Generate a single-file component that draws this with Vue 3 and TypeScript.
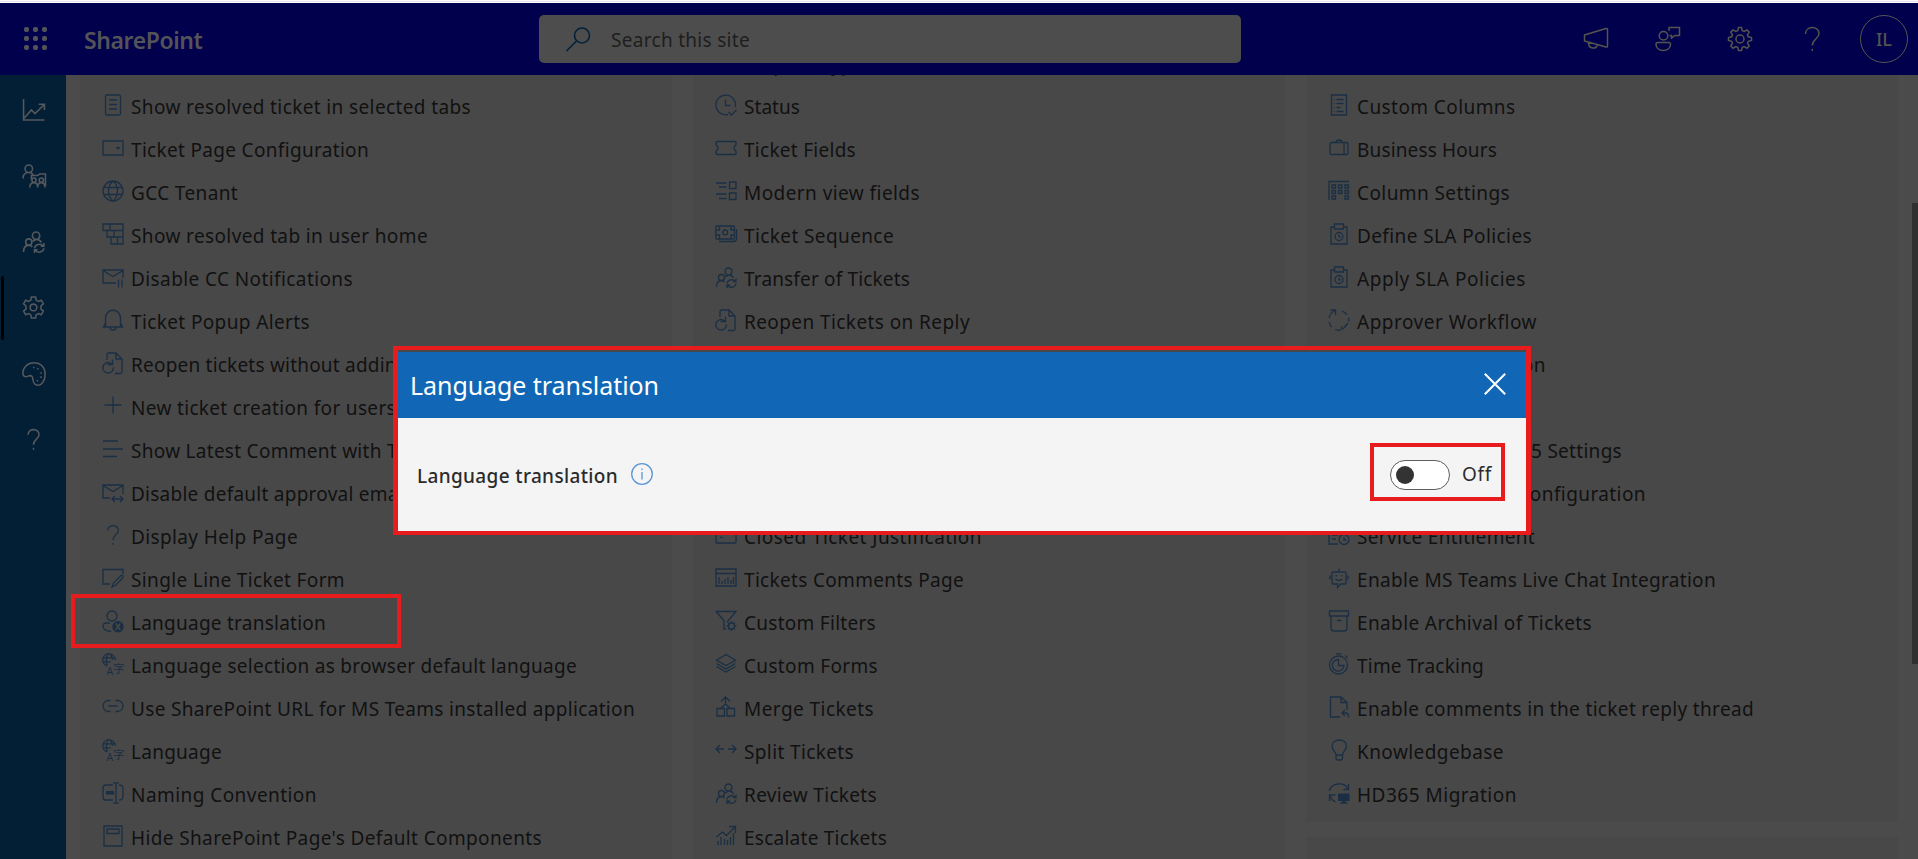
<script setup lang="ts">
import { nextTick, onMounted, ref } from 'vue'

interface Item {
  icon: string
  label: string
  /** Advance width of the label in pixels. */
  w: number
}

interface Glyph {
  s?: string
  f?: string
  text?: { x: number; y: number; size: number; t: string }[]
}

const people =
  'M13.5 2a3.5 3.5 0 1 1 0 7a3.5 3.5 0 0 1 0-7M6.5 8.5a3 3 0 1 1 0 6a3 3 0 0 1 0-6M1.5 21c0-4 2-6.3 5-6.5c1.500 0 2.500.7 3.300 1.700M10.500 11c1-1.200 2-2 3.500-2c2 0 3.600 1 4.500 3M12 17.500c.5-4 6-5 8.500-2M21 12.500v3h-3M21 17.500c-.5 4-6 5-8.500 2M12 22v-3h3'
const fileRedo =
  'M5 8V2.500q0-1.500 1.500-1.500H14l6 6V20q0 1.500-1.500 1.500H13M14 1v6h6M9.500 12C5.500 8.500.8 12 .8 16.200a5.300 5.300 0 1 0 10.600-1M10.500 7.500v5h-5'
const clipboard =
  'M6 4H3v17h16V4h-3M6.500 1h9v5h-9zM11 9.500a4 4 0 1 1 0 8a4 4 0 0 1 0-8M11 11.500v2.300h2'
const help = 'M5.800 6.500C5.800-.2 16.500 0 16.300 6.500C16.200 10.500 11 11 11 16M11 19v1.800'
const gear =
  'M11 7.800a3.200 3.200 0 1 1 0 6.400a3.200 3.200 0 0 1 0-6.400M9 1h4l.5 2.900l2.200 1.300l2.800-1.100l2 3.500L18.200 9.500v3l2.300 1.900l-2 3.500l-2.800-1.100l-2.200 1.300L13 21H9l-.5-2.900l-2.200-1.300l-2.800 1.100l-2-3.500L3.800 12.500v-3L1.500 7.600l2-3.500l2.800 1.100l2.200-1.300z'
const locale: Glyph = {
  s: 'M5 12.800A6.200 6.200 0 1 1 13.200 7M5.500 12.500Q3 7 6 1M8 1q2.500 2.500 2.500 6M1.500 4.800h11M1.200 8.800h7.500',
  text: [
    { x: 4.500, y: 21.500, size: 10.500, t: 'A' },
    { x: 11, y: 19.500, size: 11.500, t: '字' },
  ],
}

const glyphs: Record<string, Glyph> = {
  doc: { s: 'M5 1h12q1.500 0 1.500 1.500v17q0 1.500-1.500 1.500H5q-1.500 0-1.500-1.500v-17Q3.500 1 5 1M7 6h8M7 10.500h8M7 15h8' },
  page: { s: 'M1 4h20v14H1z', f: 'M13.500 10h5L16 12.800z' },
  globe: { s: 'M11 1a10 10 0 1 1 0 20a10 10 0 0 1 0-20M11 1c-6 5-6 15 0 20M11 1c6 5 6 15 0 20M2 7.500h18M2 14.500h18' },
  stack: { s: 'M1 1h20v6.500H1zM8 1v6.500M5 7.500h16V14H5zM12 7.500V14M9 14h12v7H9zM15.500 14v7' },
  mailPause: { s: 'M14 17H1V4h20v8M1 4.500l10 6l10-6M16.500 13.500v8M20 13.500v8' },
  bell: { s: 'M3.500 17V9.500C3.500-1.500 18.500-1.500 18.500 9.500V17M3.500 14l-2 4h19l-2-4M8 18.500c.5 3.500 5.500 3.500 6 0' },
  redo: { s: fileRedo },
  plus: { s: 'M11 1.500v17M2.500 10h17' },
  lines: { s: 'M1 3h15M1 11h20M1 18.500h14' },
  mailSync: { s: 'M8 17H1V4h20v9M1 4.500l10 6l10-6M10 18h11M13 15l-3 3l3 3M18 15l3 3l-3 3' },
  help: { s: help },
  edit: { s: 'M8 17H1V2.500h20V7M10 20l1.500-4L19 8.500q1.500-1 2 .5q.5 1-.5 2L14 18z' },
  userX: {
    s: 'M10 1a5 5 0 1 1 0 10a5 5 0 0 1 0-10M8 13H4.500Q1 13 1 16q0 5 8 5.500',
    f: 'M16 11a5.700 5.700 0 1 1 0 11.400a5.700 5.700 0 0 1 0-11.400m-3 2.500l2 3.200l-2 3.300h1.800l1.200-2.200l1.200 2.200h1.800l-2-3.300l2-3.200h-1.800l-1.200 2.100l-1.200-2.100z',
  },
  locale,
  link: { s: 'M8.500 4.500h-2a5.500 5.500 0 0 0 0 11h2M13.500 4.500h2a5.500 5.500 0 0 1 0 11h-2M6.500 10h9' },
  rename: { s: 'M11 3H4Q1 3 1 6v9q0 3 3 3h7M17 3q4 0 4 3v9q0 3-4 3M14 1v20M11 .8h6M11 21.200h6', f: 'M4 9h8v3.500H4z' },
  layout: { s: 'M2 1h18v20H2zM5 4h12v4.500H5z' },
  clock: { s: 'M13 20.500A9.800 9.800 0 1 1 20.300 13M10.500 5.500v6h5M13.500 18l3 3l5-5' },
  ticket: { s: 'M2 4.500h18q1 0 1 1v2.300q-4 3.200 0 6.400v2.300q0 1-1 1H2q-1 0-1-1v-2.300q4-3.200 0-6.400V5.500q0-1 1-1' },
  modern: { s: 'M14.500 2H21v6.500h-6.500zM14.500 13H21v6.500h-6.500zM1 3h10.500M4 7h7.500M1 14h10.500M4 18.500h7.500' },
  money: { s: 'M2 3h16q1.500 0 1.500 1.500v10Q19.500 16 18 16H2Q.8 16 .8 14.500v-10Q.8 3 2 3M10.200 7a2.400 2.400 0 1 1 0 4.800a2.400 2.400 0 0 1 0-4.800M1 7h3.500V3M16 3v4h3.500M1 12h3.500v4M16 16v-4h3.500M4 18.500h14.500q3 0 3-3V6' },
  people: { s: people },
  card: { s: 'M1 4h20v14q0 1-1 1H2q-1 0-1-1zM5 13l3 1' },
  report: { s: 'M1 2h20v17H1zM1 6.500h20M4 17v-7M7 17v-3M10 17v-5M13 17v-7M16 17v-4M18.500 17v-7' },
  filter: { s: 'M1 1.500h20L12 12M1 1.500l8 9V19h2M16.500 13a3 3 0 1 1 0 6a3 3 0 0 1 0-6M16.500 11v2M16.500 19v2M11.500 16h2M19.500 16h2M13 12.500l1.400 1.400M18.600 18.100l1.400 1.400M13 19.500l1.400-1.400M18.600 13.900l1.400-1.400' },
  layers: { s: 'M11 1.500l9.500 5.700L11 12.500L1.500 7.200zM1.500 10.500L11 16l9.500-5.500M1.500 13.500L11 19l9.500-5.500' },
  merge: { s: 'M2 12.500h7.500V20H2zM12 12.500h7.500V20H12zM10.500 9V1M6 5.500L10.500 1L15 5.500M6 12l4.500-4l4.500 4' },
  split: { s: 'M9 10H1M5 6l-4 4l4 4M13 10h8M17 6l4 4l-4 4' },
  chart: { s: 'M1.500 12l6-5l4 3.500L20 2M14 1.500h6.500V8M3 20v-4M6 20v-8M9.500 20v-6M12.500 20v-5M15.500 20v-8M18.500 20V8' },
  list: { s: 'M3.500 1h15v20h-15zM8.500 5.500h7M8.500 9.500h7M8.500 13.500h4M8.500 17.500h7M5.800 5.500h.8M5.800 9.500h.8M5.800 13.500h.8M5.800 17.500h.8' },
  bag: { s: 'M3.500 5.500h15q1.500 0 1.500 1.500v9q0 1.500-1.500 1.500h-15Q2 17.500 2 16V7q0-1.500 1.500-1.500M8 5.500q0-2.500 3-2.500t3 2.500M16 5.500v12' },
  grid: { s: 'M1 20V1.500h20M4 5h3.500v3H4zM10.500 5H14v3h-3.500zM17 5h3.500v3H17zM4 10.500h3.500v3H4zM10.500 10.500H14v3h-3.500zM17 10.500h3.500v3H17zM4 16h3.500v3H4zM17 16h3.500v3H17z' },
  clipboard: { s: clipboard },
  cycle: { s: 'M7 1.500C4 3 1.500 6 1.200 9M2.500 1h5v5M1.200 13q.5 3 2.500 5M7 20.500q3 1.200 5.500.5M15 20l5-6M13.500 17v4M14 2q3 1 5 4M20.500 8.500q.5 2.500 0 4' },
  service: { s: 'M10 20H1V4h18v5M4 11h6M4 15h4M16 10.500a5 5 0 1 1 0 10a5 5 0 0 1 0-10M16 13v3h2.500' },
  bot: { s: 'M5 5h12q1 0 1 1v10q0 1-1 1h-4.500L9.500 20.500V17H5q-1 0-1-1V6q0-1 1-1M11 5V1.500M2 8.500v4M20 8.500v4M8.300 8v1.500M13.700 8v1.500M7.500 12q3.500 3 7 0' },
  archive: { s: 'M1.500 1h19v5h-19zM3 6v12q0 3 3 3h10q3 0 3-3V6M9 10.500h4.500' },
  timer: { s: 'M10.500 3a9 9 0 1 1 0 18a9 9 0 0 1 0-18M10.500 6.500A5.800 5.800 0 1 0 16 12.500h-5.500zM8 .8h5.500M17.500 2.500l2 2.500' },
  reply: { s: 'M12 21H2.500V1H13l6 5.500V14M13 1v5.500h6M17 14l-3 3l3 3M14 17h3.500q3.500 0 3 4.500' },
  bulb: { s: 'M8 16c0-3-4-5-4-9c0-8 14.500-8 14.500 0c0 4-4 6-4 9zM8 16v3q0 2 2 2h2.500q2 0 2-2v-3' },
  migrate: { s: 'M1.500 9C3 0 17 0 20 7M20.500 2v5.500h-5M1.500 19v-6h6M2 14q2 4.500 5.500 6', f: 'M10 11.500h11.500v7.500h-4v1.500h2v1.200h-7.500v-1.200h2V19h-4z' },
}

const columns = ref<{ lead: boolean; items: Item[] }[]>([
  {
    lead: false,
    items: [
      { icon: 'doc', label: 'Show resolved ticket in selected tabs', w: 340 },
      { icon: 'page', label: 'Ticket Page Configuration', w: 238 },
      { icon: 'globe', label: 'GCC Tenant', w: 107 },
      { icon: 'stack', label: 'Show resolved tab in user home', w: 297 },
      { icon: 'mailPause', label: 'Disable CC Notifications', w: 222 },
      { icon: 'bell', label: 'Ticket Popup Alerts', w: 179 },
      { icon: 'redo', label: 'Reopen tickets without adding comments', w: 379 },
      { icon: 'plus', label: 'New ticket creation for users', w: 265 },
      { icon: 'lines', label: 'Show Latest Comment with Time', w: 301 },
      { icon: 'mailSync', label: 'Disable default approval email', w: 278 },
      { icon: 'help', label: 'Display Help Page', w: 167 },
      { icon: 'edit', label: 'Single Line Ticket Form', w: 214 },
      { icon: 'userX', label: 'Language translation', w: 195 },
      { icon: 'locale', label: 'Language selection as browser default language', w: 446 },
      { icon: 'link', label: 'Use SharePoint URL for MS Teams installed application', w: 504 },
      { icon: 'locale', label: 'Language', w: 91 },
      { icon: 'rename', label: 'Naming Convention', w: 186 },
      { icon: 'layout', label: "Hide SharePoint Page's Default Components", w: 411 },
    ],
  },
  {
    lead: true,
    items: [
      { icon: 'ticket', label: 'Request Type', w: 119 },
      { icon: 'clock', label: 'Status', w: 56 },
      { icon: 'ticket', label: 'Ticket Fields', w: 112 },
      { icon: 'modern', label: 'Modern view fields', w: 176 },
      { icon: 'money', label: 'Ticket Sequence', w: 150 },
      { icon: 'people', label: 'Transfer of Tickets', w: 166 },
      { icon: 'redo', label: 'Reopen Tickets on Reply', w: 226 },
      { icon: 'people', label: 'Assign Tickets', w: 132 },
      { icon: 'page', label: 'Ticket Templates', w: 152 },
      { icon: 'clock', label: 'Scheduled Tickets', w: 162 },
      { icon: 'card', label: 'Canned Responses', w: 165 },
      { icon: 'card', label: 'Closed Ticket Justification', w: 238 },
      { icon: 'report', label: 'Tickets Comments Page', w: 220 },
      { icon: 'filter', label: 'Custom Filters', w: 132 },
      { icon: 'layers', label: 'Custom Forms', w: 134 },
      { icon: 'merge', label: 'Merge Tickets', w: 130 },
      { icon: 'split', label: 'Split Tickets', w: 110 },
      { icon: 'people', label: 'Review Tickets', w: 133 },
      { icon: 'chart', label: 'Escalate Tickets', w: 143 },
    ],
  },
  {
    lead: false,
    items: [
      { icon: 'list', label: 'Custom Columns', w: 158.500 },
      { icon: 'bag', label: 'Business Hours', w: 140 },
      { icon: 'grid', label: 'Column Settings', w: 153 },
      { icon: 'clipboard', label: 'Define SLA Policies', w: 175 },
      { icon: 'clipboard', label: 'Apply SLA Policies', w: 169 },
      { icon: 'cycle', label: 'Approver Workflow', w: 180 },
      { icon: 'page', label: 'Ticket Configuration', w: 189 },
      { icon: 'globe', label: 'External Users', w: 132 },
      { icon: 'people', label: 'Microsoft Office 365 Settings', w: 265 },
      { icon: 'bot', label: 'Power Automate Configuration', w: 289 },
      { icon: 'service', label: 'Service Entitlement', w: 178 },
      { icon: 'bot', label: 'Enable MS Teams Live Chat Integration', w: 359 },
      { icon: 'archive', label: 'Enable Archival of Tickets', w: 235 },
      { icon: 'timer', label: 'Time Tracking', w: 127 },
      { icon: 'reply', label: 'Enable comments in the ticket reply thread', w: 397 },
      { icon: 'bulb', label: 'Knowledgebase', w: 147 },
      { icon: 'migrate', label: 'HD365 Migration', w: 160 },
    ],
  },
])

const rail = [
  { name: 'reports', active: false, d: 'M1.500 1v20h20M2 19.500L9 11.500l3.500 3.500L21 6.500M16 6h5.500v5.500' },
  { name: 'agents', active: false, d: 'M6.500 1a3.600 3.600 0 1 1 0 7.200a3.600 3.600 0 0 1 0-7.200M1 14c0-4 2.500-5.800 5.500-5.800c2 0 3.500 1 4.200 2.300M9 15v-4h6l2-1.500h5.500V21M11.500 13.500a2 2 0 1 1 0 4a2 2 0 0 1 0-4M18.500 13.500a2 2 0 1 1 0 4a2 2 0 0 1 0-4M7.500 22.500c0-3 1.700-4.500 4-4.500s3.500 1.500 3.500 4.500c0-3 1.500-4.500 3.500-4.500s3.500 1.500 3.500 4.500' },
  { name: 'users', active: false, d: people },
  { name: 'settings', active: true, d: gear },
  { name: 'theme', active: false, d: 'M.8 10.500C1 5 5.500.8 11.500.8c6.500 0 10.700 4.500 10.700 10.700c0 6-3 10.700-6.700 10.700c-6.500 0-4-6.500-6-8.500c-2.500-2-4 1-6.500.3C1.500 13.500.8 12 .8 10.500M10.500 5.200H12M14.500 6.500H16M17.500 10.500H19M17.500 14.500H19M14 18h1.500' },
  { name: 'help', active: false, d: help },
]

const root = ref<HTMLElement | null>(null)

/** Spreads each label over its advance width by adjusting the letter spacing. */
function fitLabels() {
  root.value?.querySelectorAll<HTMLElement>('[data-w]').forEach((el) => {
    const target = Number(el.dataset.w)
    const length = (el.textContent ?? '').length
    el.style.letterSpacing = `${(target - el.getBoundingClientRect().width) / length}px`
  })
}

onMounted(async () => {
  await nextTick()
  fitLabels()
})
</script>

<template>
  <div ref="root" class="app">
    <div class="strip"></div>
    <header class="top">
      <div class="waffle"><i v-for="n in 9" :key="n"></i></div>
      <div class="brand"><span class="fit" data-w="118.5">SharePoint</span></div>
      <div class="search">
        <svg width="26" height="26" viewBox="0 0 26 26"><path d="M17 2a7.500 7.500 0 1 1 0 15a7.500 7.500 0 0 1 0-15M11.500 15L1.500 25" /></svg>
        <span class="fit" data-w="139">Search this site</span>
      </div>
      <nav class="actions">
        <svg width="26" height="26" viewBox="0 0 26 26"><path d="M1.500 9L23 2.500q1.500-.3 1.500 1V20q0 1.500-1.500 1L1.500 15zM5.500 16.500c0 7 8 7 9 2" /></svg>
        <svg width="26" height="26" viewBox="0 0 26 26"><path d="M8.500 5.500a4.300 4.300 0 1 1 0 8.600a4.300 4.300 0 0 1 0-8.600M3 16.500h11q1.500 0 1.500 2c0 8-14.500 8-14.500 0q0-2 2-2M14 5V1.500h10.500v8H20L16.500 12V9.500H14.500" /></svg>
        <svg width="26" height="26" viewBox="0 0 26 26"><path d="M13 9a4 4 0 1 1 0 8a4 4 0 0 1 0-8M11.500 1.500h3l.8 3.200l2 .8l2.700-1.600l2.200 2.200l-1.700 2.700l.8 2l3.200.7v3l-3.200.8l-.8 2l1.700 2.700l-2.200 2.200l-2.700-1.700l-2 .8l-.8 3.200h-3l-.8-3.200l-2-.8L6 22.200L3.800 20l1.700-2.700l-.8-2l-3.200-.8v-3l3.200-.7l.8-2l-1.700-2.700L6 3.900l2.700 1.600l2-.8z" /></svg>
        <svg width="26" height="26" viewBox="0 0 26 26"><path d="M6.500 8C6.500-.5 20-.5 20 7.500C20 13 13.300 13 13.300 19.500M13.300 23v2" /></svg>
        <div class="avatar">IL</div>
      </nav>
    </header>

    <div class="shell">
      <aside class="rail">
        <div v-for="r in rail" :key="r.name" class="rail-item" :class="{ active: r.active }">
          <svg width="24" height="24" viewBox="0 0 23 23"><path :d="r.d" /></svg>
        </div>
      </aside>

      <main class="content">
        <div v-for="(col, c) in columns" :key="c" class="column">
          <section class="panel" :class="{ lead: col.lead }">
            <div v-for="item in col.items" :key="item.label" class="row">
              <svg width="22" height="22" viewBox="0 0 22 22">
                <path v-if="glyphs[item.icon].s" :d="glyphs[item.icon].s" />
                <path v-if="glyphs[item.icon].f" class="solid" fill-rule="evenodd" :d="glyphs[item.icon].f" />
                <text v-for="t in glyphs[item.icon].text" :key="t.t" :x="t.x" :y="t.y" :font-size="t.size">{{ t.t }}</text>
              </svg>
              <span class="fit" :data-w="item.w">{{ item.label }}</span>
            </div>
          </section>
          <section v-if="c === 2" class="panel next"></section>
        </div>
      </main>
      <div class="thumb"></div>
    </div>

    <div class="mark mark-row"></div>

    <div class="frame">
      <div class="dialog-head">
        <h2><span class="fit" data-w="249">Language translation</span></h2>
        <svg width="22" height="22" viewBox="0 0 22 22"><path d="M.8.8l20.400 20.400M21.200.8L.8 21.200" /></svg>
      </div>
      <div class="dialog-body">
        <span class="field"><span class="fit" data-w="201">Language translation</span></span>
        <svg width="22" height="22" viewBox="0 0 22 22"><circle cx="11" cy="11" r="10.300" /><path d="M11 9v7.500M11 5.500v1.600" /></svg>
        <div class="switch-box">
          <div class="switch"><i></i></div>
          <span class="off"><span class="fit" data-w="30">Off</span></span>
        </div>
      </div>
    </div>
  </div>
</template>

<style>
html,
body {
  margin: 0;
  overflow: hidden;
}
</style>

<style scoped>
.app {
  position: relative;
  display: flex;
  flex-direction: column;
  width: 1918px;
  height: 859px;
  overflow: hidden;
  background: #4b4b4b;
  color: #111;
  font-family: 'Noto Sans', 'Open Sans', 'Noto Sans CJK SC', sans-serif;
  font-size: 19px;
}

svg {
  flex: none;
  overflow: visible;
  fill: none;
  stroke: currentColor;
  stroke-width: 1.3;
}

.fit {
  display: inline-block;
  white-space: nowrap;
}

.strip {
  flex: none;
  height: 3px;
  box-sizing: border-box;
  background: #fbfaff;
  border-bottom: 1px solid #fff;
  border-top: 1px solid #fafafa;
  box-shadow: inset 0 1px #e6e2f2;
}

.top {
  flex: none;
  display: flex;
  align-items: center;
  height: 72px;
  background: #00004d;
  color: #4d4d4d;
}

.waffle {
  display: grid;
  grid-template-columns: repeat(3, 5px);
  gap: 4px;
  margin-left: 24px;
  margin-bottom: 1px;
}

.waffle i {
  width: 5px;
  height: 5px;
  border-radius: 2px;
  background: #535358;
}

.brand {
  box-sizing: border-box;
  width: 455px;
  padding-top: 1px;
  padding-left: 37px;
  font-size: 23px;
  font-weight: 600;
  color: #535358;
}

.search {
  display: flex;
  align-items: center;
  box-sizing: border-box;
  width: 702px;
  height: 48px;
  margin-left: 37px;
  padding-left: 26px;
  border-radius: 5px;
  background: #4d4d4d;
  color: #1e1e1e;
}

.search svg {
  margin-right: 20px;
  color: #03213a;
  stroke-width: 1.600;
}

.search .fit {
  margin-top: 2px;
}

.actions {
  display: flex;
  align-items: center;
  margin-left: auto;
  margin-right: 10px;
  gap: 46px;
}

.actions svg {
  stroke-width: 1.500;
  color: #55554e;
}

.avatar {
  display: grid;
  place-items: center;
  box-sizing: border-box;
  width: 48px;
  height: 48px;
  margin-left: -11px;
  margin-right: 0;
  border: 1px solid #55554e;
  border-radius: 50%;
  font-size: 18px;
  font-weight: 500;
  color: #55554e;
}

.shell {
  flex: 1;
  display: flex;
  min-height: 0;
  overflow: hidden;
}

.rail {
  flex: none;
  width: 66px;
  padding-top: 2px;
  padding-left: 1px;
  box-sizing: border-box;
  background: #031f36;
  color: #55585c;
}

.rail-item {
  display: flex;
  align-items: center;
  justify-content: center;
  height: 66px;
}

.rail-item svg {
  stroke-width: 1.500;
}

.rail-item.active::before {
  content: '';
  width: 3px;
  height: 64px;
  margin-right: 18px;
  border-radius: 2px;
  background: #000;
}

.rail-item.active {
  justify-content: flex-start;
}

.content {
  flex: 1;
  display: flex;
  gap: 21px;
  padding-left: 14px;
}

.column {
  width: 592px;
  margin-top: -32px;
}

.panel {
  padding: 43px 0 5px;
  background: #484848;
}

.panel.lead {
  padding-top: 0;
}

.panel.next {
  height: 40px;
  margin-top: 15px;
  padding: 0;
}

.row {
  display: flex;
  align-items: center;
  height: 43px;
  padding-left: 22px;
}

.row svg {
  margin-bottom: 6px;
  margin-right: 7px;
  color: #1a2f44;
}

.row svg .solid {
  fill: currentColor;
  stroke: none;
}

.row svg text {
  fill: currentColor;
  stroke: none;
}

.row .fit {
  margin-bottom: 2px;
}

.thumb {
  flex: none;
  width: 6px;
  height: 461px;
  margin-top: 128px;
  background: #303030;
}

.mark {
  position: absolute;
  box-sizing: border-box;
  border: 4px solid #e81c1c;
}

.mark-row {
  left: 71px;
  top: 594px;
  width: 330px;
  height: 54px;
}

.frame {
  position: absolute;
  left: 393px;
  top: 346px;
  width: 1138px;
  height: 189px;
  box-sizing: border-box;
  display: flex;
  flex-direction: column;
  border: 5px solid #e81c1c;
  border-top-width: 4px;
  border-bottom-width: 4px;
  background: #f4f4f4;
}

.dialog-head {
  display: flex;
  align-items: center;
  justify-content: space-between;
  box-sizing: border-box;
  height: 68px;
  padding: 0 20px 0 12px;
  border-top: 2px solid #484848;
  background: #1167b5;
  color: #fff;
}

.dialog-head h2 {
  margin: 0;
  font-size: 25px;
  font-weight: 400;
}

.dialog-head svg {
  margin-bottom: 3px;
  stroke-width: 2;
}

.dialog-body {
  flex: 1;
  display: flex;
  align-items: center;
  padding-left: 19px;
  color: #2b2b2b;
}

.field {
  margin-top: 2px;
  font-weight: 500;
}

.dialog-body > svg {
  margin-left: 13px;
  margin-bottom: 1px;
  color: #5a96d6;
}

.switch-box {
  display: flex;
  align-items: center;
  box-sizing: border-box;
  width: 135px;
  height: 58px;
  margin-left: auto;
  margin-right: 21px;
  margin-bottom: 6px;
  padding-left: 16px;
  border: 4px solid #e81c1c;
}

.switch {
  display: flex;
  align-items: center;
  box-sizing: border-box;
  width: 60px;
  height: 30px;
  margin-top: 6px;
  padding-left: 5px;
  border: 1px solid #605e5c;
  border-radius: 15px;
  background: #fff;
}

.switch i {
  width: 18px;
  height: 18px;
  border-radius: 50%;
  background: #333;
}

.off {
  margin-left: 12px;
  margin-top: 5px;
}
</style>
